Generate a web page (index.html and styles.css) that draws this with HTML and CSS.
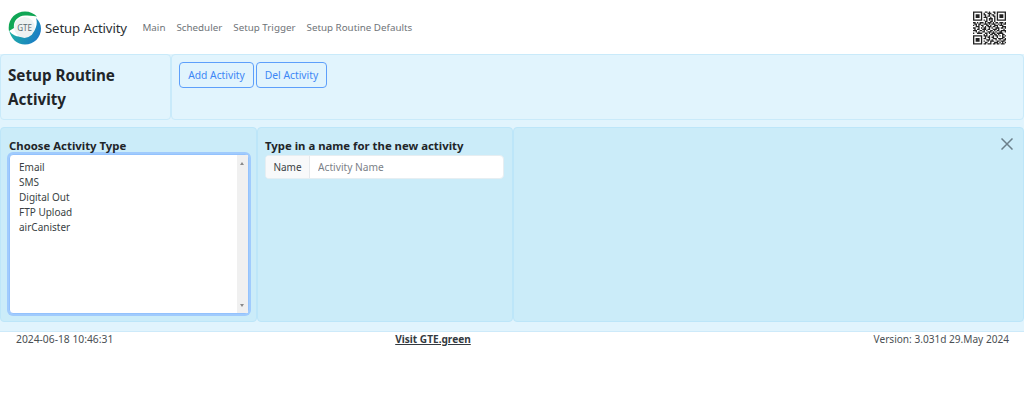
FILE: index.html
```html
<!DOCTYPE html>
<html lang="en">
<head>
<meta charset="utf-8">
<title>Setup Activity</title>
<link rel="stylesheet" href="styles.css">
</head>
<body>
<nav class="navbar">
  <svg class="logo" viewBox="0 0 34 34" width="34" height="34" aria-hidden="true">
    <defs>
      <linearGradient id="ringB" x1="0" y1="0.3" x2="1" y2="0.7">
        <stop offset="0" stop-color="#1fb8a0"/>
        <stop offset="1" stop-color="#1a78c8"/>
      </linearGradient>
    </defs>
    <path d="M1 20C-1 9 7 .5 17 .5c5 0 9 2 12 5-5-1-9-1-12-1C9 5 5 11 6 17z" fill="#10a655"/>
    <path d="M1 19c2 9 8 14.500 16 14.500 9 0 16-7 16-16 0-4-2-8-5-10.500 1 3 1 6 0 9-2 6-7 10-13 10-6 0-11-2-14-6.500z" fill="url(#ringB)"/>
    <circle cx="16.500" cy="16.500" r="10.400" fill="#eef2f2"/>
    <text x="16.500" y="19.700" class="logo-text" text-anchor="middle">GTE</text>
  </svg>
  <span class="brand">Setup Activity</span>
  <ul class="nav-links">
    <li>Main</li>
    <li>Scheduler</li>
    <li>Setup Trigger</li>
    <li>Setup Routine Defaults</li>
  </ul>
  <svg class="qr" viewBox="0 0 25 25" width="33" height="34" aria-hidden="true">
    <path stroke="#222" stroke-width="1" fill="none" d="M0 .5h7M9 .5h2M12 .5h1M15 .5h2M18 .5h7M0 1.500h1M6 1.500h1M8 1.500h1M11 1.500h3M16 1.500h1M18 1.500h1M24 1.500h1M0 2.500h1M2 2.500h3M6 2.500h1M8 2.500h2M12 2.500h1M14 2.500h2M18 2.500h1M20 2.500h3M24 2.500h1M0 3.500h1M2 3.500h3M6 3.500h1M9 3.500h1M11 3.500h2M15 3.500h2M18 3.500h1M20 3.500h3M24 3.500h1M0 4.500h1M2 4.500h3M6 4.500h1M8 4.500h3M13 4.500h1M16 4.500h1M18 4.500h1M20 4.500h3M24 4.500h1M0 5.500h1M6 5.500h1M10 5.500h1M12 5.500h3M16 5.500h1M18 5.500h1M24 5.500h1M0 6.500h7M8 6.500h1M10 6.500h1M12 6.500h1M14 6.500h1M16 6.500h1M18 6.500h7M9 7.500h2M13 7.500h2M16 7.500h1M0 8.500h2M3 8.500h1M5 8.500h3M9 8.500h1M11 8.500h3M15 8.500h1M17 8.500h2M20 8.500h3M24 8.500h1M1 9.500h2M4 9.500h2M8 9.500h3M12 9.500h1M14 9.500h3M19 9.500h1M21 9.500h1M23 9.500h2M0 10.500h1M2 10.500h1M4 10.500h1M6 10.500h2M10 10.500h2M13 10.500h1M16 10.500h3M20 10.500h3M2 11.500h3M7 11.500h1M9 11.500h1M11 11.500h3M15 11.500h2M18 11.500h1M22 11.500h3M0 12.500h2M4 12.500h1M6 12.500h1M8 12.500h2M12 12.500h1M14 12.500h1M17 12.500h3M21 12.500h2M24 12.500h1M1 13.500h1M3 13.500h2M7 13.500h3M11 13.500h2M15 13.500h3M19 13.500h1M23 13.500h1M0 14.500h3M5 14.500h2M8 14.500h1M10 14.500h1M13 14.500h2M16 14.500h1M18 14.500h2M21 14.500h4M2 15.500h1M4 15.500h1M7 15.500h2M11 15.500h3M15 15.500h1M17 15.500h1M20 15.500h2M24 15.500h1M0 16.500h1M3 16.500h4M9 16.500h2M12 16.500h1M14 16.500h3M18 16.500h5M8 17.500h1M10 17.500h1M13 17.500h2M16 17.500h2M19 17.500h1M22 17.500h2M0 18.500h7M8 18.500h3M12 18.500h1M15 18.500h1M17 18.500h2M20 18.500h1M22 18.500h1M24 18.500h1M0 19.500h1M6 19.500h1M9 19.500h1M11 19.500h2M14 19.500h2M18 19.500h1M22 19.500h2M0 20.500h1M2 20.500h3M6 20.500h1M8 20.500h2M12 20.500h1M15 20.500h3M19 20.500h4M24 20.500h1M0 21.500h1M2 21.500h3M6 21.500h1M10 21.500h3M14 21.500h1M17 21.500h1M20 21.500h1M23 21.500h2M0 22.500h1M2 22.500h3M6 22.500h1M8 22.500h1M11 22.500h1M13 22.500h3M18 22.500h2M21 22.500h3M0 23.500h1M6 23.500h1M9 23.500h2M13 23.500h1M16 23.500h3M20 23.500h1M22 23.500h1M24 23.500h1M0 24.500h7M8 24.500h2M11 24.500h3M15 24.500h2M18 24.500h2M21 24.500h3"/>
  </svg>
</nav>

<main class="shell">
  <section class="row row-top">
    <div class="panel panel-title"><h1 class="title">Setup Routine Activity</h1></div>
    <div class="panel panel-actions">
      <button class="btn btn-add" type="button">Add Activity</button>
      <button class="btn btn-del" type="button">Del Activity</button>
    </div>
  </section>

  <section class="row row-main">
    <div class="panel-dark col-list">
      <h2 class="label">Choose Activity Type</h2>
      <div class="listbox">
        <ul class="options">
          <li>Email</li>
          <li>SMS</li>
          <li>Digital Out</li>
          <li>FTP Upload</li>
          <li>airCanister</li>
        </ul>
        <div class="scrollbar">
          <span class="arrow arrow-up"></span>
          <span class="arrow arrow-down"></span>
        </div>
      </div>
    </div>
    <div class="panel-dark col-name">
      <h2 class="label">Type in a name for the new activity</h2>
      <div class="input-group">
        <span class="addon">Name</span>
        <input class="field" type="text" placeholder="Activity Name">
      </div>
    </div>
    <div class="panel-dark col-detail">
      <svg class="close" viewBox="0 0 12 12" width="12" height="12" aria-hidden="true">
        <path d="M.5.5l11 11M11.500.5l-11 11" stroke="#6b7f8a" stroke-width="1.500" fill="none"/>
      </svg>
    </div>
  </section>
</main>

<footer class="footer">
  <span class="stamp">2024-06-18 10:46:31</span>
  <a class="visit" href="#">Visit GTE.green</a>
  <span class="version">Version: 3.031d 29.May 2024</span>
</footer>
</body>
</html>
```
FILE: styles.css
```css
* { box-sizing: border-box; }

html, body {
  margin: 0;
  padding: 0;
  background: #fff;
  color: #212529;
  font-family: "Noto Sans", "Open Sans", sans-serif;
  font-size: 10px;
}

.navbar {
  display: flex;
  align-items: center;
  height: 54px;
  padding: 1px 18px 0 8px;
}

.logo { flex: none; }
.logo-text { font-family: "Noto Sans", sans-serif; font-size: 8px; fill: #5a6b70; }

.brand {
  margin-left: 3px;
  font-size: 13.200px;
  letter-spacing: -.12px;
  color: #2b3034;
}

.nav-links {
  display: flex;
  gap: 11px;
  list-style: none;
  margin: 0 0 0 15.500px;
  padding: 0;
  color: #6f7478;
  font-size: 9.800px;
  flex: 1;
}

.qr { flex: none; }

.shell {
  background: #e1f4fd;
  border-bottom: 1px solid #cdeafa;
  height: 278px;
}

.row { display: flex; }
.row-top { height: 66px; margin-bottom: 7px; }
.row-main { height: 195px; }

.panel {
  border: 1px solid #c9eafa;
  border-radius: 4px;
}
.panel-title { width: 171px; padding: 8px 7px; }
.panel-actions {
  flex: 1;
  display: flex;
  align-items: flex-start;
  gap: 2px;
  padding: 7px 7px;
}

.title {
  margin: 0;
  font-size: 15.200px;
  line-height: 24px;
  font-weight: 700;
  color: #212529;
}

.btn {
  height: 26px;
  padding: 0;
  border: 1px solid #5d9ffb;
  border-radius: 4px;
  background: transparent;
  color: #3d87f5;
  font: inherit;
  font-size: 10.300px;
}
.btn-add { width: 75px; }
.btn-del { width: 71px; }

.panel-dark {
  background: #cbecf9;
  border: 1px solid #bde6f9;
  border-radius: 4px;
  padding: 9px 8px 0;
}
.col-list { width: 257px; }
.col-name { width: 256px; padding-left: 7px; }
.col-detail { flex: 1; display: flex; justify-content: flex-end; padding: 10px 10px 0 0; }

.label {
  margin: 0;
  font-size: 11.350px;
  line-height: 17px;
  font-weight: 700;
  color: #212529;
}

.listbox {
  display: flex;
  width: 240px;
  height: 160px;
  background: #fff;
  border: 1px solid #93c2fd;
  border-radius: 4px;
  box-shadow: 0 0 0 2px #a0cbfd;
}

.options {
  flex: 1;
  list-style: none;
  margin: 0;
  padding: 4.600px 9px;
  color: #3a3f44;
  font-size: 10px;
  line-height: 15.100px;
}

.scrollbar {
  position: relative;
  width: 11px;
  background: #f0f0f0;
}
.arrow {
  position: absolute;
  left: 3px;
  width: 0;
  height: 0;
  border-left: 2.500px solid transparent;
  border-right: 2.500px solid transparent;
}
.arrow-up { top: 7px; border-bottom: 3px solid #8a8a8a; }
.arrow-down { bottom: 6px; border-top: 3px solid #8a8a8a; }

.input-group {
  display: flex;
  width: 239px;
  height: 24px;
  margin-top: 1px;
  background: #fff;
  border: 1px solid #e6eef2;
  border-radius: 4px;
}
.addon {
  display: flex;
  align-items: center;
  justify-content: center;
  width: 44px;
  background: #f8f9fa;
  border-right: 1px solid #e6e9ec;
  border-radius: 3px 0 0 3px;
  color: #3a3f44;
  font-size: 10px;
}
.field {
  flex: 1;
  min-width: 0;
  border: 0;
  outline: 0;
  background: transparent;
  padding: 0 8px;
  font: inherit;
  font-size: 10.200px;
  border-radius: 0 3px 3px 0;
}
.field::placeholder { color: #7b8187; opacity: 1; }

.footer {
  display: grid;
  grid-template-columns: 340px 154px 1fr;
  align-items: center;
  padding: 0 15px 0 16px;
  height: 14px;
  font-size: 10.100px;
  color: #4a4f54;
}
.stamp { font-size: 10.300px; }
.visit { font-weight: 700; color: #343a40; text-decoration: underline; text-align: center; }
.version { text-align: right; }
```
